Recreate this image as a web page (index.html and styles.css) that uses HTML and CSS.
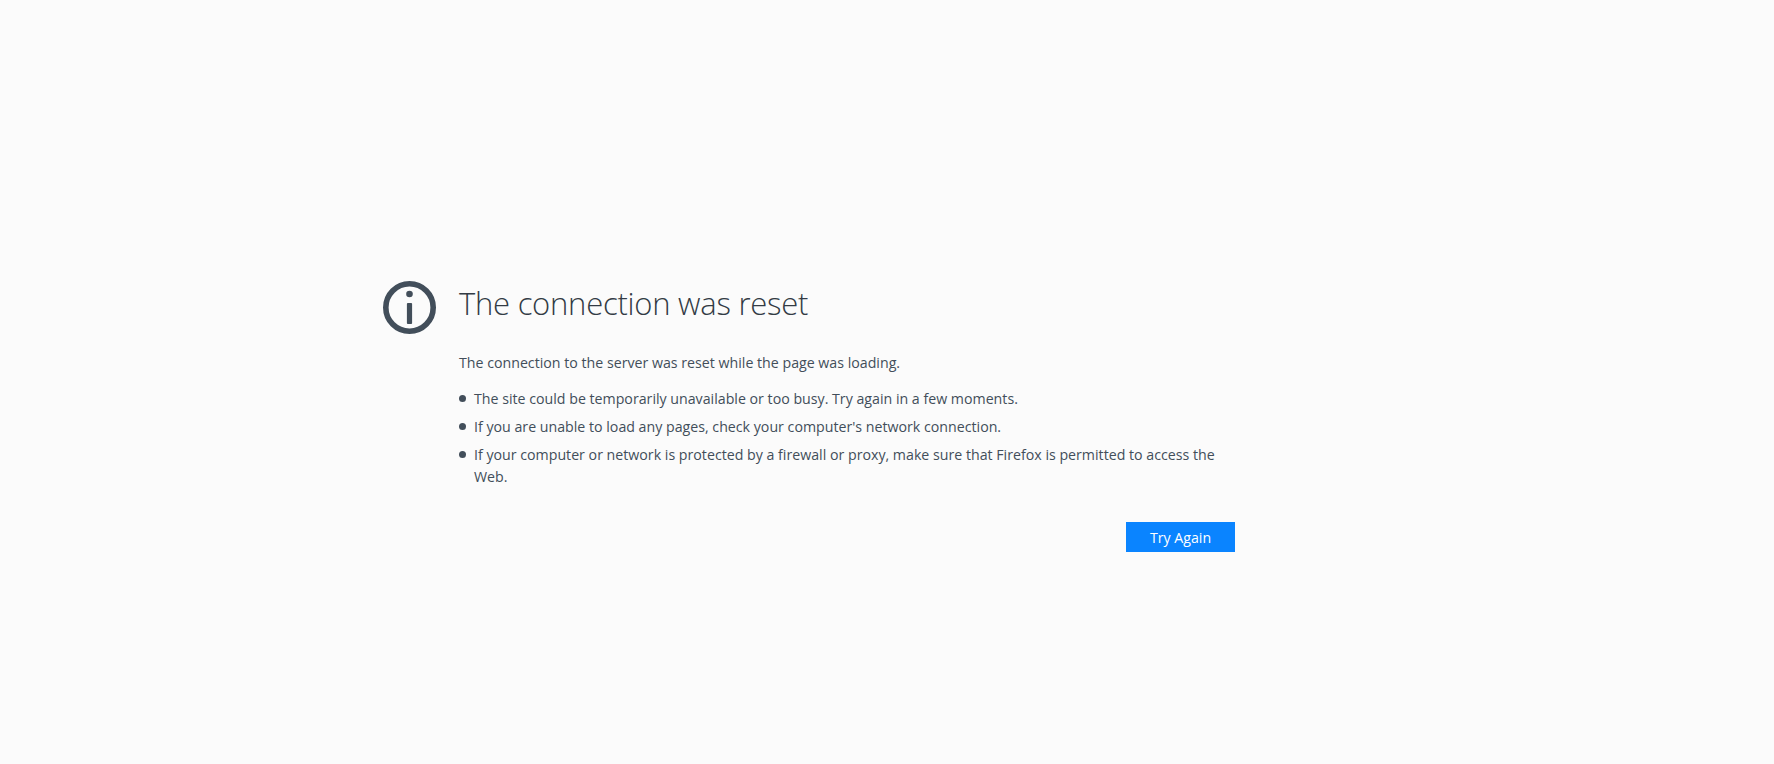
FILE: index.html
```html
<!DOCTYPE html>
<html lang="en">
<head>
<meta charset="utf-8">
<title>Problem loading page</title>
<link rel="stylesheet" href="styles.css">
</head>
<body>
<main class="page">
  <svg class="icon" viewBox="0 0 53 53" width="53" height="53" aria-hidden="true">
    <circle cx="26.5" cy="26.5" r="23.7" fill="none" stroke="#424e5a" stroke-width="5.6"/>
    <circle cx="26.5" cy="13" r="3.3" fill="#424e5a"/>
    <rect x="23.9" y="22" width="5.2" height="21" rx="1" fill="#424e5a"/>
  </svg>
  <div class="content">
    <h1 class="title">The connection was reset</h1>
    <p class="lead">The connection to the server was reset while the page was loading.</p>
    <ul class="tips">
      <li>The site could be temporarily unavailable or too busy. Try again in a few moments.</li>
      <li>If you are unable to load any pages, check your computer's network connection.</li>
      <li>If your computer or network is protected by a firewall or proxy, make sure that Firefox is permitted to access the Web.</li>
    </ul>
    <div class="actions"><button class="retry" type="button">Try Again</button></div>
  </div>
</main>
</body>
</html>
```
FILE: styles.css
```css
html, body { margin: 0; height: 100%; }
body {
  background: #fbfbfb;
  color: #424e5a;
  font-family: "Open Sans", "Noto Sans", sans-serif;
  font-size: 14.2px;
  overflow: hidden;
}
.page {
  display: flex;
  align-items: flex-start;
  gap: 23px;
  padding: 281px 0 0 383px;
}
.icon { flex: none; display: block; }
.content { width: 776px; }
.title {
  margin: 0;
  font-size: 31px;
  font-weight: 300;
  letter-spacing: -0.25px;
  line-height: 44px;
  color: #333b45;
}
.lead { margin: 27px 0 0; line-height: 22px; }
.tips { margin: 14px 0 0; padding: 0 0 0 15px; list-style: none; }
.tips li { position: relative; margin-bottom: 6px; line-height: 22px; }
.tips li::before {
  content: "";
  position: absolute;
  left: -15px;
  top: 7px;
  width: 7px;
  height: 7px;
  border-radius: 50%;
  background: #424e5a;
}
.actions { display: flex; justify-content: flex-end; margin-top: 34px; }
.retry {
  width: 109px;
  height: 30px;
  border: 0;
  padding: 0;
  background: #0a84ff;
  color: #fff;
  font: inherit;
}
```
